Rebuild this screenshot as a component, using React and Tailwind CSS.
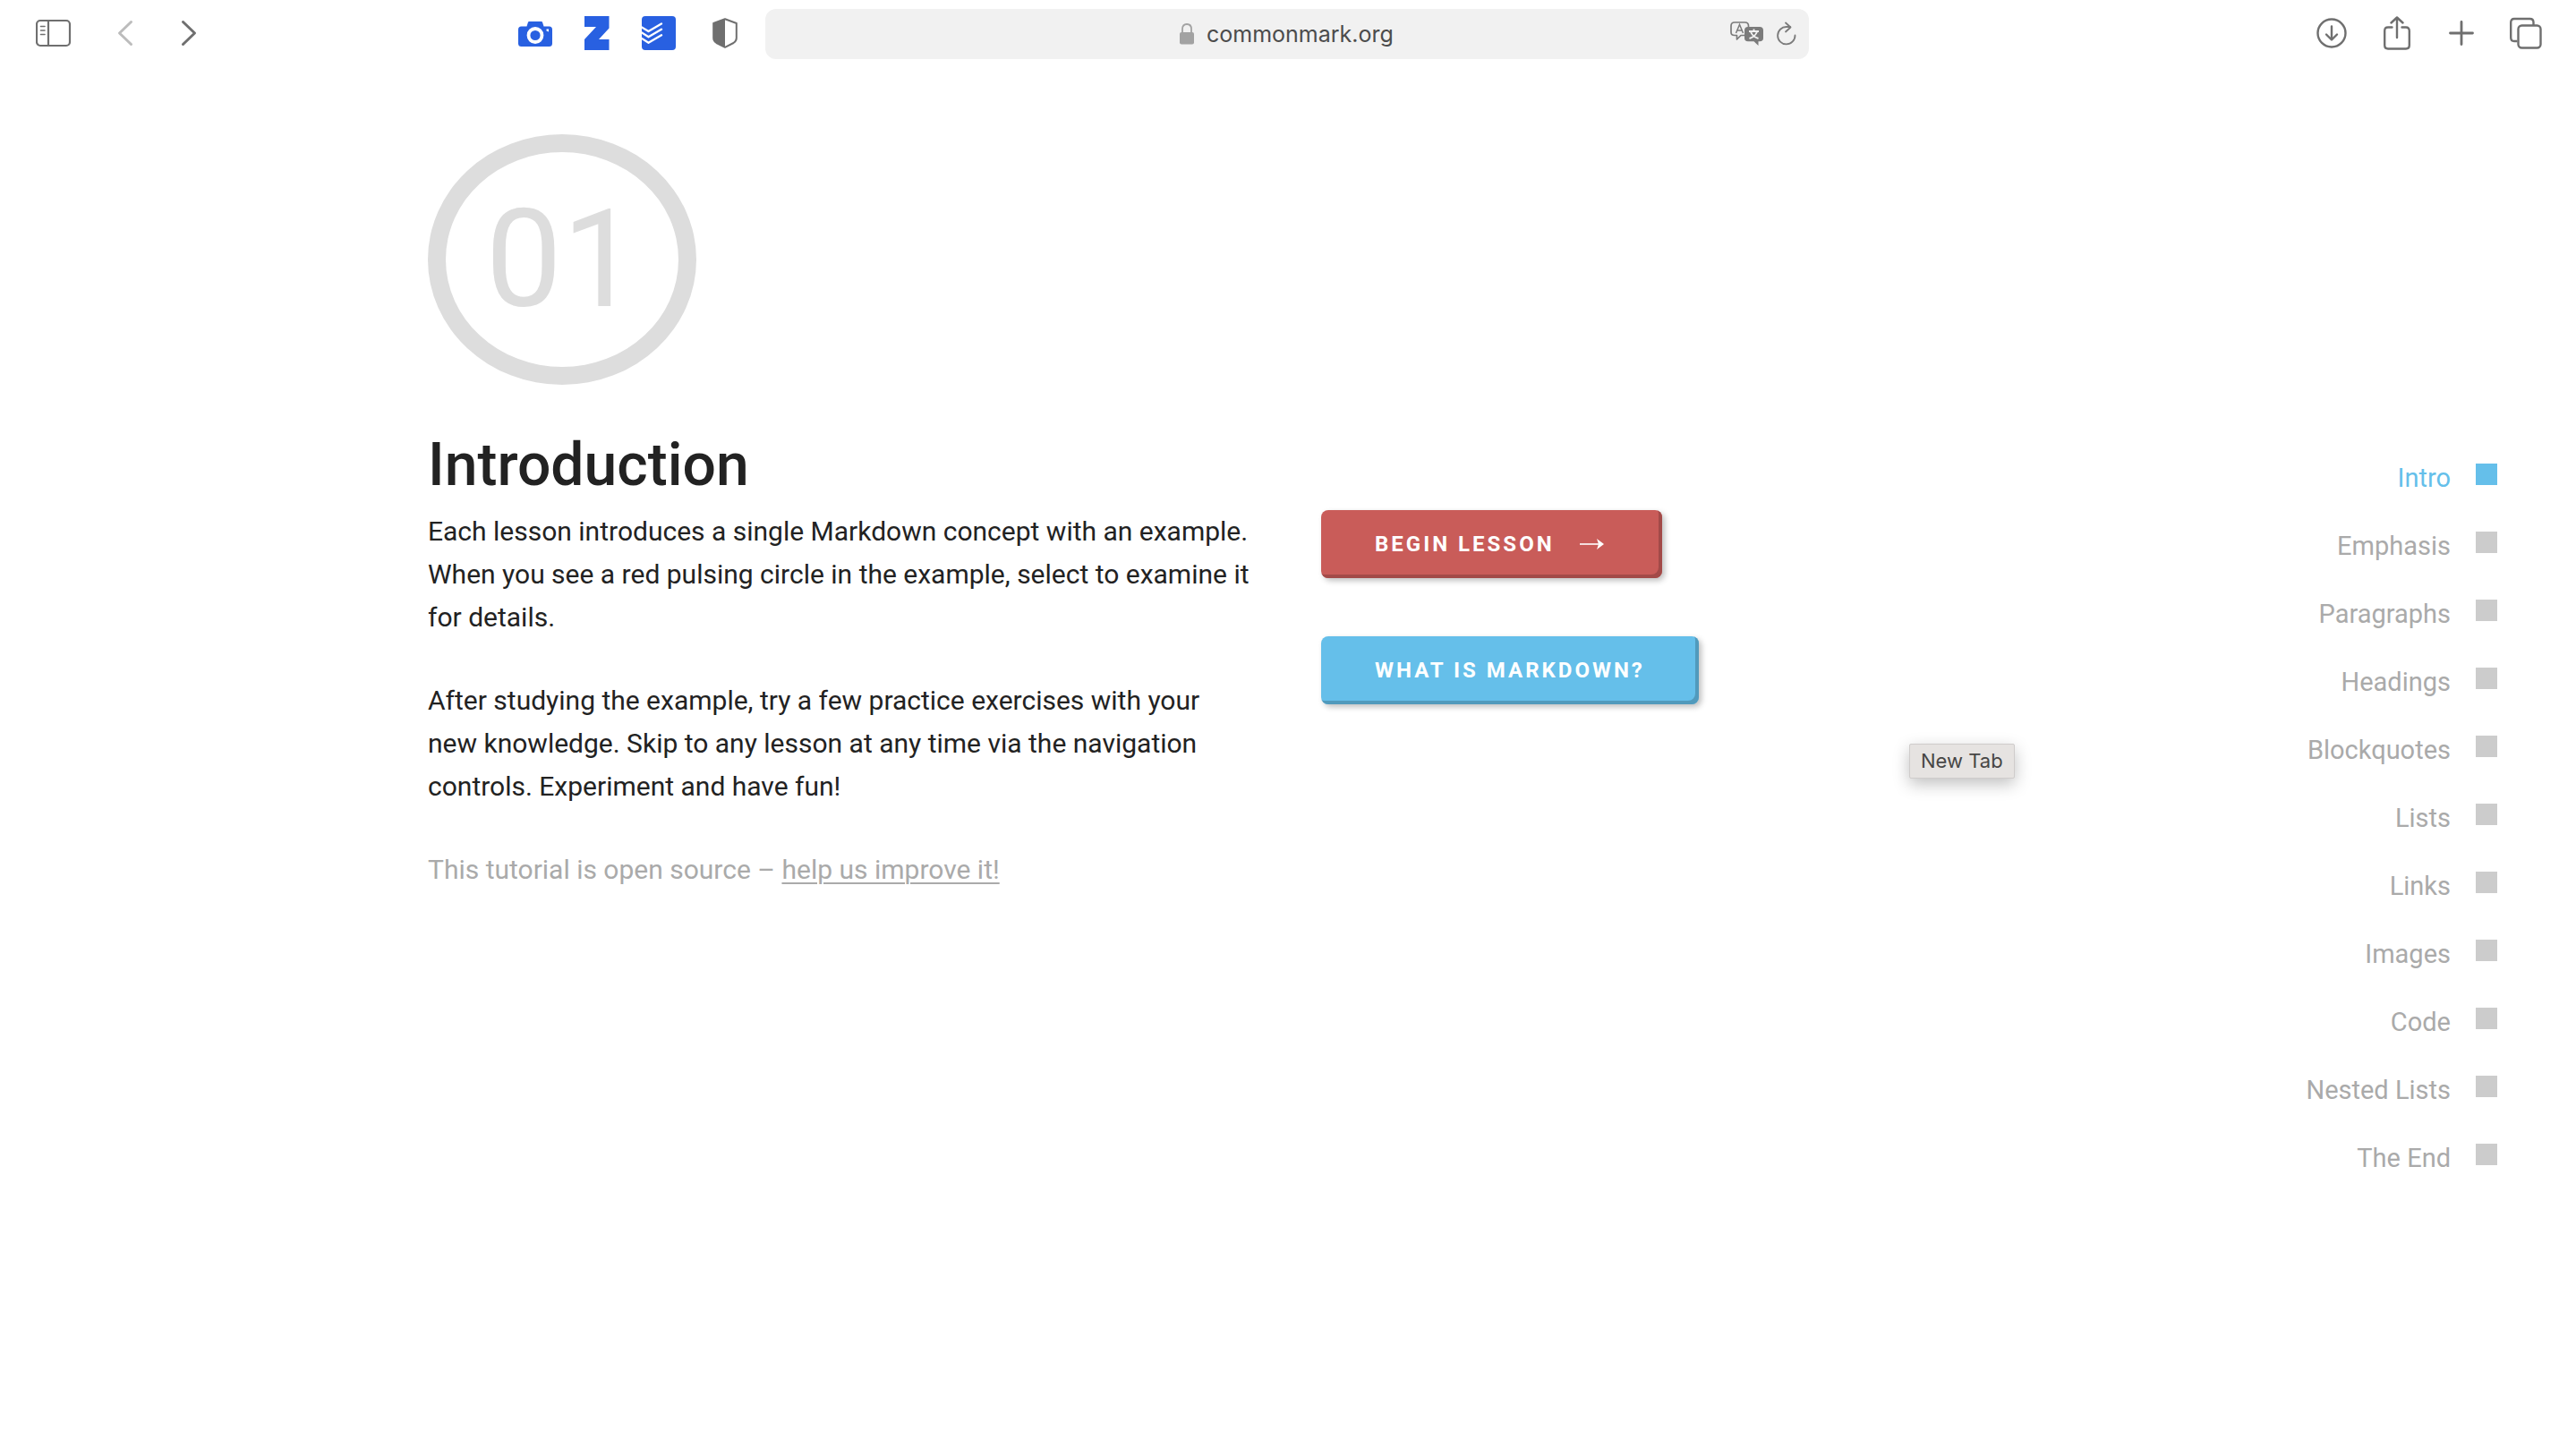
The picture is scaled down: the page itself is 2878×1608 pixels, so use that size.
import React from "react";

const lessons = [
  "Intro",
  "Emphasis",
  "Paragraphs",
  "Headings",
  "Blockquotes",
  "Lists",
  "Links",
  "Images",
  "Code",
  "Nested Lists",
  "The End",
];

function SidebarIcon() {
  return (
    <svg width="40" height="32" viewBox="0 0 40 32" fill="none" stroke="#6f6f6f" strokeWidth="2.200" strokeLinecap="round">
      <rect x="1" y="2" width="37" height="28" rx="4" />
      <path d="M14 2v28" />
      <path d="M5.500 8.500h4.500M5.500 13h4.500M5.500 17.500h4.500" strokeWidth="1.600" />
    </svg>
  );
}

function ChevronIcon({ flip, color }) {
  return (
    <svg width="18" height="30" viewBox="0 0 18 30" fill="none" stroke={color} strokeWidth="3" strokeLinecap="round" strokeLinejoin="round">
      <path d={flip ? "M2.500 2.500 15.500 15 2.500 27.500" : "M15.500 2.500 2.500 15 15.500 27.500"} />
    </svg>
  );
}

function CameraIcon() {
  return (
    <svg width="38" height="38" viewBox="0 0 38 38">
      <path fill="#2860e1" d="M9.500 11.500 11 6.800Q11.300 6 12.200 6H25.800Q26.700 6 27 6.800L28.500 11.500H34.500Q38 11.500 38 15V30.500Q38 34 34.500 34H3.500Q0 34 0 30.500V15Q0 11.500 3.500 11.500Z" />
      <circle cx="19" cy="21.500" r="7.500" fill="none" stroke="#fff" strokeWidth="3.800" />
      <path d="M31.500 14.500h2.500v3l-2.500-1z" fill="#fff" />
    </svg>
  );
}

function ZIcon() {
  return (
    <svg width="28" height="38" viewBox="0 0 28 38">
      <path fill="#2860e1" d="M0 0H27.500V13.500L16 26H27.500V38H0V26L13 12H0Z" />
    </svg>
  );
}

function ChecksIcon() {
  return (
    <svg width="38" height="38" viewBox="0 0 38 38">
      <rect width="38" height="38" rx="4" fill="#2860e1" />
      <g fill="none" stroke="#fff" strokeWidth="2.300" strokeLinecap="round" strokeLinejoin="round">
        <path d="M0 12.500 7.500 17 22 8.500" />
        <path d="M0 18.500 7.500 23.300 22 14.800" />
        <path d="M0 25 7.500 29.800 22 21.300" />
      </g>
    </svg>
  );
}

function ShieldIcon() {
  return (
    <svg width="28" height="34" viewBox="0 0 28 34">
      <path d="M14 1.200 26.800 6V22.500Q26.800 26 23.500 28L14 32.800 4.500 28Q1.200 26 1.200 22.500V6Z" fill="none" stroke="#6f6f6f" strokeWidth="2" strokeLinejoin="round" />
      <path d="M14 1 1 6V22.500Q1 26 4.500 28L14 33Z" fill="#6f6f6f" />
    </svg>
  );
}

function LockIcon() {
  return (
    <svg width="16" height="24" viewBox="0 0 16 24">
      <path d="M3 11V6.500Q3 1 8 1T13 6.500V11" fill="none" stroke="#a2a2a2" strokeWidth="1.800" />
      <rect y="10" width="16" height="13.500" rx="2" fill="#a2a2a2" />
    </svg>
  );
}

function TranslateIcon() {
  return (
    <svg width="38" height="28" viewBox="0 0 38 28" fill="none">
      <path d="M16 15.500H12L7.500 20V15.500H5Q1 15.500 1 12V5Q1 1 5 1H16.500Q20.500 1 20.500 5V6.500" stroke="#7b7b7b" strokeWidth="1.700" strokeLinejoin="round" />
      <path d="M6.500 13 10.500 3.500 14.500 13M8 10H13" stroke="#7b7b7b" strokeWidth="1.500" />
      <path d="M20 6H33Q37 6 37 10V18.500Q37 22.300 33 22.300H31.500V27L26.500 22.300H20Q16 22.300 16 18.500V10Q16 6 20 6Z" fill="#7b7b7b" />
      <path d="M21 11H32M26.500 8.500V11M23 11.500Q25 17 31.500 19M30 11.500Q28 17 21.500 19" stroke="#f1f1f1" strokeWidth="1.900" />
    </svg>
  );
}

function ReloadIcon() {
  return (
    <svg width="22" height="28" viewBox="0 0 22 28" fill="none" stroke="#7b7b7b" strokeWidth="1.800" strokeLinecap="round" strokeLinejoin="round">
      <path d="M20.500 15.500A9.700 9.700 0 1 1 11 6H15" />
      <path d="M10 1.500 15.500 6.500 10 11.500" />
    </svg>
  );
}

function DownloadIcon() {
  return (
    <svg width="34" height="34" viewBox="0 0 34 34" fill="none" stroke="#6f6f6f" strokeWidth="2.400" strokeLinecap="round" strokeLinejoin="round">
      <circle cx="17" cy="17" r="15.500" />
      <path d="M17 9.500V24M11 18.500 17 24.500 23 18.500" />
    </svg>
  );
}

function ShareIcon() {
  return (
    <svg width="30" height="38" viewBox="0 0 30 38" fill="none" stroke="#6f6f6f" strokeWidth="2.400" strokeLinecap="round" strokeLinejoin="round">
      <path d="M9.500 12.500H5Q1.200 12.500 1.200 16.500V32.500Q1.200 36.500 5 36.500H25Q28.800 36.500 28.800 32.500V16.500Q28.800 12.500 25 12.500H20.500" />
      <path d="M15 24V1.500M8.500 7.500 15 1.500 21.500 7.500" />
    </svg>
  );
}

function PlusIcon() {
  return (
    <svg width="28" height="28" viewBox="0 0 28 28" fill="none" stroke="#6f6f6f" strokeWidth="2.800" strokeLinecap="round">
      <path d="M14 1.500V26.500M1.500 14H26.500" />
    </svg>
  );
}

function TabsIcon() {
  return (
    <svg width="36" height="36" viewBox="0 0 36 36" fill="none" stroke="#6f6f6f" strokeWidth="2.400">
      <path d="M8.500 27H5Q1.200 27 1.200 23V6Q1.200 2 5 2H22.500Q26.500 2 26.500 6V9" />
      <rect x="9.500" y="9.500" width="25" height="25" rx="4" />
    </svg>
  );
}

function ArrowIcon() {
  return (
    <svg width="28" height="12" viewBox="0 0 28 12">
      <path d="M0 5.200H21V6.800H0Z" fill="#fff" />
      <path d="M19 0 27 6 19 12 21 6Z" fill="#fff" />
    </svg>
  );
}

function ToolButton({ label, className, children }) {
  return (
    <button type="button" aria-label={label} className={"flex h-10 items-center justify-center " + className}>
      {children}
    </button>
  );
}

function Toolbar() {
  return (
    <header className="grid h-20 grid-cols-[855fr_1166fr_857fr]">
      <div className="flex items-start justify-between pt-[17px] pr-[5px] pl-10">
        <div className="flex gap-6">
          <ToolButton label="Show sidebar" className="w-10"><SidebarIcon /></ToolButton>
          <div className="flex">
            <ToolButton label="Back" className="w-[71px]"><ChevronIcon color="#bcbcbc" /></ToolButton>
            <ToolButton label="Forward" className="w-[71px]"><ChevronIcon flip color="#6f6f6f" /></ToolButton>
          </div>
        </div>
        <div className="flex">
          <ToolButton label="Screenshot" className="w-[69px]"><CameraIcon /></ToolButton>
          <ToolButton label="Zotero" className="w-[69px]"><ZIcon /></ToolButton>
          <ToolButton label="Todoist" className="w-[69px]"><ChecksIcon /></ToolButton>
          <ToolButton label="Privacy report" className="w-20"><ShieldIcon /></ToolButton>
        </div>
      </div>
      <div className="mt-[10px] grid h-14 grid-cols-[1fr_auto_1fr] items-center rounded-xl bg-[#f1f1f1] px-[14px]">
        <span />
        <div className="flex items-center gap-[14px]">
          <LockIcon />
          <input
            aria-label="Address"
            defaultValue="commonmark.org"
            className="h-10 w-[210px] bg-transparent font-['Inter',sans-serif] text-[25px] text-[#4c4c4c] outline-none"
          />
        </div>
        <div className="flex items-center justify-end gap-[14px]">
          <button type="button" aria-label="Translate"><TranslateIcon /></button>
          <button type="button" aria-label="Reload"><ReloadIcon /></button>
        </div>
      </div>
      <div className="flex items-start justify-end pt-[17px] pr-5">
        <ToolButton label="Downloads" className="w-[74px]"><DownloadIcon /></ToolButton>
        <ToolButton label="Share" className="w-[72px]"><ShareIcon /></ToolButton>
        <ToolButton label="New tab" className="w-[72px]"><PlusIcon /></ToolButton>
        <ToolButton label="Tab overview" className="w-[72px]"><TabsIcon /></ToolButton>
      </div>
    </header>
  );
}

function LessonNav() {
  return (
    <nav aria-label="Lessons" className="pt-[430px] pr-[88px] text-[29px]">
      <ul>
        {lessons.map((name, i) => (
          <li key={name} className="h-[76px]">
            <a href="#lesson" className={"flex justify-end gap-7 " + (i === 0 ? "text-[#65bfea]" : "text-[#aaaaaa]")}>
              <span className="leading-[48px]">{name}</span>
              <span className={"mt-2 size-6 " + (i === 0 ? "bg-[#65bfea]" : "bg-[#cccccc]")} />
            </a>
          </li>
        ))}
      </ul>
    </nav>
  );
}

export default function App() {
  return (
    <div className="relative min-h-screen bg-white font-['Roboto',sans-serif] text-[30px] text-[#222222]">
      <Toolbar />
      <div className="grid grid-cols-[478fr_1922fr_478fr]">
        <main className="col-start-2 pt-[70px]">
          <div className="flex h-[280px] w-[300px] items-center justify-center rounded-[50%] border-[20px] border-[#dddddd] text-[152px] leading-none text-[#dddddd]">
            01
          </div>
          <h1 className="mt-[50px] mb-[10px] text-[66px] leading-[80px] font-medium">Introduction</h1>
          <div className="grid grid-cols-[922fr_924fr] gap-x-[76px] leading-[48px]">
            <div className="flex flex-col gap-[45px]">
              <p>
                Each lesson introduces a single Markdown concept with an example. When you see a red
                pulsing circle in the example, select to examine it for details.
              </p>
              <p>
                After studying the example, try a few practice exercises with your new knowledge. Skip
                to any lesson at any time via the navigation controls. Experiment and have fun!
              </p>
              <p className="text-[#aaaaaa]">
                This tutorial is open source –{" "}
                <a href="#improve" className="underline decoration-2 underline-offset-4">help us improve it!</a>
              </p>
            </div>
            <div className="flex flex-col items-start gap-[65px] text-2xl leading-7 font-bold tracking-[3px] text-white uppercase">
              <button
                type="button"
                className="flex h-[76px] items-center gap-7 rounded-lg bg-[#c95c59] pr-16 pl-[60px] uppercase shadow-[inset_-4px_-4px_0_#a24a48,3px_3px_6px_rgba(0,0,0,0.25)]"
              >
                Begin Lesson
                <ArrowIcon />
              </button>
              <button
                type="button"
                className="h-[76px] rounded-lg bg-[#65bfea] px-[60px] uppercase shadow-[inset_-4px_-4px_0_#519abc,3px_3px_6px_rgba(0,0,0,0.25)]"
              >
                What is Markdown?
              </button>
            </div>
          </div>
        </main>
        <LessonNav />
      </div>
      <div
        role="tooltip"
        className="absolute top-[831px] left-[2133px] rounded-xs border border-[#cfcccb] bg-[#e6e3e1] px-3 font-['Inter',sans-serif] text-[22px] leading-[37px] text-[#474645] shadow-[0_6px_18px_rgba(0,0,0,0.25)]"
      >
        New Tab
      </div>
    </div>
  );
}
